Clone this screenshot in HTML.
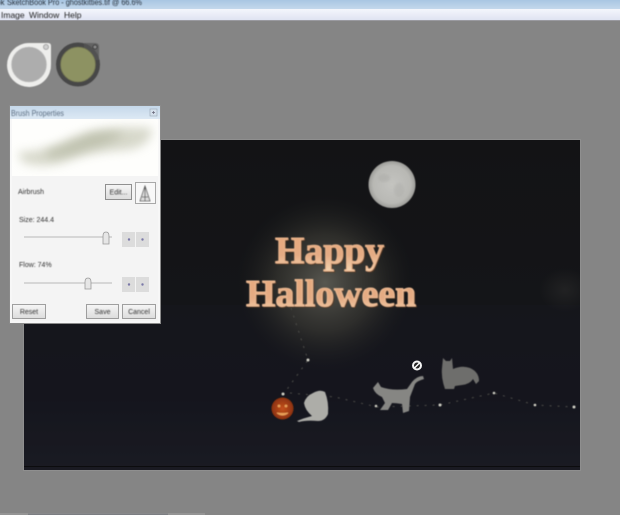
<!DOCTYPE html>
<html><head><meta charset="utf-8"><style>
html,body{margin:0;padding:0;background:#858585;width:620px;height:515px;overflow:hidden}
svg{display:block}
text{font-family:"Liberation Sans",sans-serif}
</style></head><body>
<svg width="620" height="515" viewBox="0 0 620 515" xmlns="http://www.w3.org/2000/svg">
<defs>
<linearGradient id="tb" x1="0" y1="0" x2="0" y2="1"><stop offset="0" stop-color="#a9c6e2"/><stop offset="1" stop-color="#c4d8ec"/></linearGradient>
<linearGradient id="mb" x1="0" y1="0" x2="0" y2="1"><stop offset="0" stop-color="#f4f6fc"/><stop offset="1" stop-color="#dfe3f2"/></linearGradient>
<linearGradient id="dt" x1="0" y1="0" x2="0" y2="1"><stop offset="0" stop-color="#c5d8ea"/><stop offset="1" stop-color="#dde9f4"/></linearGradient>
<linearGradient id="btn" x1="0" y1="0" x2="0" y2="1"><stop offset="0" stop-color="#f6f6f6"/><stop offset="1" stop-color="#dcdcdc"/></linearGradient>
<linearGradient id="txt" x1="0" y1="0" x2="0" y2="1"><stop offset="0" stop-color="#e8aa7c"/><stop offset=".6" stop-color="#e4ab84"/><stop offset="1" stop-color="#f6d8b4"/></linearGradient>
<radialGradient id="glow"><stop offset="0" stop-color="#64635a" stop-opacity=".85"/><stop offset=".55" stop-color="#3e3d36" stop-opacity=".6"/><stop offset="1" stop-color="#222220" stop-opacity="0"/></radialGradient>
<radialGradient id="moon"><stop offset="0" stop-color="#c4c4c0"/><stop offset=".8" stop-color="#b8b8b4"/><stop offset="1" stop-color="#9c9c98"/></radialGradient>
<radialGradient id="pump" cx=".5" cy=".5"><stop offset="0" stop-color="#c4501c"/><stop offset="1" stop-color="#8c3210"/></radialGradient>
<linearGradient id="cv" x1="0" y1="0" x2="0" y2="1"><stop offset="0" stop-color="#131315"/><stop offset=".5" stop-color="#141518"/><stop offset=".78" stop-color="#13141b"/><stop offset="1" stop-color="#1a1b22"/></linearGradient>
<radialGradient id="spot"><stop offset="0" stop-color="#2a2a2a" stop-opacity=".6"/><stop offset="1" stop-color="#2a2a2a" stop-opacity="0"/></radialGradient>
<filter id="b1"><feGaussianBlur stdDeviation=".6"/></filter>
<filter id="b2"><feGaussianBlur stdDeviation="1"/></filter>
<filter id="b5" x="-40%" y="-60%" width="180%" height="220%"><feGaussianBlur stdDeviation="5"/></filter>
<filter id="bt"><feGaussianBlur stdDeviation=".4"/></filter>
</defs>

<rect width="620" height="515" fill="#858585"/>
<rect width="620" height="9" fill="url(#tb)"/>
<text x="-4" y="5" font-size="8" fill="#26303c" filter="url(#bt)">ok</text>
<text x="7" y="5" font-size="8.500" textLength="135" lengthAdjust="spacingAndGlyphs" fill="#26303c" filter="url(#bt)">SketchBook Pro - ghostkitties.tif @ 66.6%</text>
<rect y="9" width="620" height="11" fill="url(#mb)"/>
<rect y="20" width="620" height="1" fill="#9a9aa0"/>
<text x="1" y="18" font-size="8.500" fill="#222" filter="url(#bt)">Image</text>
<text x="29" y="18" font-size="8.500" fill="#222" filter="url(#bt)">Window</text>
<text x="64" y="18" font-size="8.500" fill="#222" filter="url(#bt)">Help</text>

<g filter="url(#b1)">
<path d="M29 43 H48 Q51 43 51 46 V64 A22 22 0 1 1 29 43Z" fill="#eeeeec"/>
<circle cx="29" cy="64.500" r="17.500" fill="#adadad" stroke="#bcbcbc" stroke-width=".6"/>
<circle cx="46" cy="47" r="2.500" fill="#cfcfcf" stroke="#a0a0a0"/>
<circle cx="78" cy="64.500" r="22" fill="#474747"/>
<path d="M84 43 H95 Q99 43 99 47 V60 H84Z" fill="#555" opacity=".7"/>
<circle cx="78" cy="64.500" r="17.500" fill="#8d9262" stroke="#66684e" stroke-width=".8"/>
<circle cx="95" cy="47" r="2" fill="#8a8a8a" stroke="#3a3a3a"/>
</g>

<!-- canvas -->
<rect x="23" y="139" width="558" height="332" fill="#8f8f8f"/>
<svg x="24" y="140" width="556" height="330" viewBox="24 140 556 330">
<rect x="24" y="140" width="556" height="330" fill="url(#cv)"/>
<rect x="24" y="305" width="556" height="165" fill="#1a1a24" opacity=".3"/>
<ellipse cx="565" cy="290" rx="26" ry="22" fill="url(#spot)"/>
<circle cx="325" cy="283" r="88" fill="url(#glow)"/>
<rect x="24" y="466" width="556" height="1" fill="#0c0c0e"/>
</svg>

<!-- moon -->
<circle cx="392" cy="184.500" r="23.500" fill="url(#moon)" filter="url(#b1)"/>
<ellipse cx="384" cy="178" rx="6" ry="4" fill="#acaca8" opacity=".5" filter="url(#b2)"/>
<ellipse cx="399" cy="190" rx="5" ry="7" fill="#acaca8" opacity=".4" filter="url(#b2)"/>

<!-- text -->
<g font-weight="bold" filter="url(#bt)">
<text x="276" y="264" font-size="38" textLength="109" lengthAdjust="spacingAndGlyphs" style="font-family:'Liberation Serif',serif" fill="#5c3c28" stroke="#5c3c28" stroke-width=".8">Happy</text>
<text x="275" y="263" font-size="38" textLength="109" lengthAdjust="spacingAndGlyphs" style="font-family:'Liberation Serif',serif" fill="url(#txt)" stroke="#e9b48c" stroke-width="1">Happy</text>
<text x="247" y="307" font-size="38" textLength="170" lengthAdjust="spacingAndGlyphs" style="font-family:'Liberation Serif',serif" fill="#5c3c28" stroke="#5c3c28" stroke-width=".8">Halloween</text>
<text x="246" y="306" font-size="38" textLength="170" lengthAdjust="spacingAndGlyphs" style="font-family:'Liberation Serif',serif" fill="url(#txt)" stroke="#edbb94" stroke-width="1">Halloween</text>
</g>

<!-- dotted path -->
<path d="M291 308 L308 360 L283 395 M290 393 L335 397 L377 407 L440 405 L494 393 L535 405 L574 407" fill="none" stroke="#4c4c48" stroke-width="1" stroke-dasharray="2 6" filter="url(#bt)"/>
<g fill="#cfcfc4" filter="url(#bt)">
<circle cx="308" cy="360" r="1.500"/><circle cx="283" cy="394" r="1.500"/><circle cx="376" cy="406" r="1.300"/><circle cx="440" cy="405" r="1.500"/><circle cx="494" cy="393" r="1.300"/><circle cx="535" cy="405" r="1.300"/><circle cx="574" cy="407" r="1.500"/>
</g>

<!-- pumpkin -->
<g filter="url(#bt)">
<ellipse cx="282.500" cy="408.500" rx="11" ry="11" fill="url(#pump)"/>
<circle cx="279" cy="406" r="1.400" fill="#e8a058"/><circle cx="286" cy="406" r="1.400" fill="#e8a058"/>
<path d="M277 413 Q282.500 417 288 413 Q282.500 414 277 413Z" fill="#e8a058" stroke="#e8a058"/>
</g>

<!-- white cat -->
<path d="M297 421 Q304 418 312 416 Q305 410 304 403 Q306 396 313 393 Q320 389 325 392 Q329 402 328 414 Q325 421 318 421 Q306 420 299 422Z" fill="#adada8" filter="url(#b1)"/>
<!-- grey cat 1 -->
<path d="M373 388 L378 382 L381 387 Q392 391 407 389 L412 382 Q417 376 423 376 L424 379 Q417 381 415 384 L410 397 L409 411 L403 413 L402 404 Q396 403 392 403 L388 410 L380 410 L385 403 L382 397 Q375 394 373 388Z" fill="#868683" filter="url(#b1)"/>
<!-- grey cat 2 -->
<path d="M443 358 L446 361 L450 361 L452 358 L453 369 Q462 365 470 368 Q479 372 479 381 L476 384 L473 379 Q470 384 462 385 L455 386 L454 389 L445 389 Q441 378 442 368Z" fill="#6e6e6c" filter="url(#b1)"/>
<!-- no-sign cursor -->
<circle cx="417" cy="365.500" r="5" fill="#f4f4f4"/>
<circle cx="417" cy="365.500" r="3" fill="#222"/>
<path d="M414.500 368 L419.500 363" stroke="#fff" stroke-width="1.400"/>

<!-- dialog -->
<rect x="9.500" y="105.500" width="151" height="218" fill="#f7f7f7" stroke="#8a8a8a"/>
<rect x="10" y="106" width="150" height="13" fill="url(#dt)"/>
<text x="11" y="116" font-size="8" textLength="53" lengthAdjust="spacingAndGlyphs" fill="#5f7185" filter="url(#bt)">Brush Properties</text>
<rect x="150" y="109" width="7" height="7" fill="#d5e0ec" stroke="#9aa8b6" stroke-width=".6"/>
<path d="M152 112.500h3M153.500 111v3" stroke="#667" stroke-width=".7"/>
<rect x="12" y="119" width="146" height="57" fill="#fefefc"/>
<svg x="12" y="119" width="146" height="57" viewBox="12 119 146 57">
<path d="M18 152 Q45 152 70 138 Q105 124 152 128 Q152 146 128 150 Q90 152 70 160 Q45 170 22 162Z" fill="#d0d2c2" opacity=".85" filter="url(#b5)"/>
<path d="M45 152 Q70 144 90 134 Q110 130 125 134 Q110 144 90 148 Q70 156 50 158Z" fill="#b6b9a4" opacity=".75" filter="url(#b5)"/>
</svg>
<rect x="12" y="176" width="146" height="145" fill="#f4f4f4"/>

<g font-size="7" fill="#333" filter="url(#bt)">
<text x="18" y="194">Airbrush</text>
<text x="19" y="222">Size: 244.4</text>
<text x="19" y="267">Flow: 74%</text>
</g>
<rect x="105.500" y="184.500" width="26" height="15" fill="url(#btn)" stroke="#777" stroke-width=".8"/>
<text x="118.500" y="194.500" font-size="7" fill="#333" text-anchor="middle" filter="url(#bt)">Edit...</text>
<rect x="135.500" y="182.500" width="20" height="21" fill="#f8f8f8" stroke="#a8a8a8"/>
<path d="M145 186 L140 201 H150Z M145 186 V201 M142 197 H148" fill="#ddd" stroke="#555" stroke-width=".8" filter="url(#bt)"/>

<!-- sliders -->
<rect x="24" y="236" width="88" height="2" fill="#d6d6d6"/>
<rect x="24" y="282" width="88" height="2" fill="#d6d6d6"/>
<path d="M103 236 Q103 232 106 232 Q109 232 109 236 V244 H103Z" fill="#e6e6e6" stroke="#999" stroke-width=".8"/>
<path d="M85 282 Q85 278 88 278 Q91 278 91 282 V289 H85Z" fill="#e6e6e6" stroke="#999" stroke-width=".8"/>
<g fill="#dcdcdc"><rect x="122" y="232" width="13" height="15"/><rect x="136" y="232" width="13" height="15"/><rect x="122" y="277" width="13" height="15"/><rect x="136" y="277" width="13" height="15"/></g>
<g fill="#7a78a8"><circle cx="129" cy="239.500" r="1.200"/><circle cx="142.500" cy="239.500" r="1.200"/><circle cx="129" cy="284.500" r="1.200"/><circle cx="142.500" cy="284.500" r="1.200"/></g>

<!-- buttons -->
<g fill="url(#btn)" stroke="#8a8a8a" stroke-width=".8">
<rect x="12.500" y="304.500" width="33" height="14"/>
<rect x="86.500" y="304.500" width="32" height="14"/>
<rect x="122.500" y="304.500" width="33" height="14"/>
</g>
<g font-size="7" fill="#333" text-anchor="middle" filter="url(#bt)">
<text x="29" y="314">Reset</text><text x="102.500" y="314">Save</text><text x="139" y="314">Cancel</text>
</g>

<rect x="0" y="513" width="205" height="2" fill="#949494"/>
<rect x="28" y="513.500" width="140" height="1.500" fill="#7c7e82"/>
</svg>
</body></html>
